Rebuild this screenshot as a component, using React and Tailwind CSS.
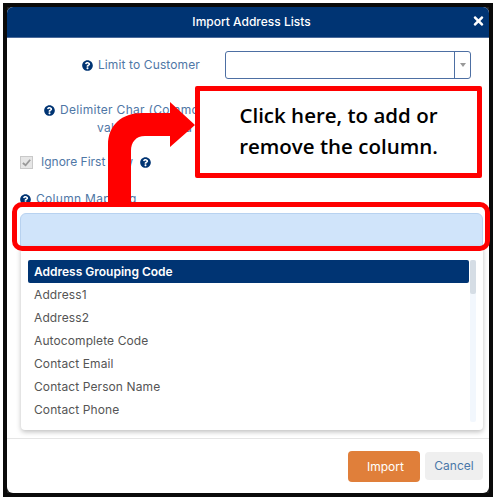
const FONT = { fontFamily: 'Inter, "Liberation Sans", sans-serif' };

function Help({ className = "" }) {
  return (
    <svg viewBox="0 0 512 512" className={`w-[11px] h-[11px] shrink-0 ${className}`} fill="#003473">
      <path d="M504 256c0 137-111 248-248 248S8 393 8 256 119 8 256 8s248 111 248 248zM262.700 90c-54.500 0-89.300 23-116.500 63.800-3.500 5.300-2.400 12.400 2.700 16.300l34.700 26.300c5.200 3.900 12.600 3 16.700-2.100 17.900-22.700 30.100-35.800 57.300-35.800 20.400 0 45.700 13.100 45.700 32.900 0 15-12.400 22.700-32.600 34-23.600 13.200-54.800 29.700-54.800 70.900V300c0 6.600 5.400 12 12 12h56c6.600 0 12-5.400 12-12v-1.300c0-28.600 83.500-29.800 83.500-107.100 0-58.200-60.400-102.600-117.700-102.600zM256 339c-25.500 0-46.200 20.700-46.200 46.200s20.700 46.200 46.200 46.200 46.200-20.700 46.200-46.200S281.500 339 256 339z" />
    </svg>
  );
}

const items = ["Address1", "Address2", "Autocomplete Code", "Contact Email", "Contact Person Name", "Contact Phone"];

export default function App() {
  return (
    <div className="relative w-[495px] h-[498px] bg-white pl-[3px] pt-[3px] overflow-hidden" style={FONT}>
      <div className="w-[490px] h-[494px] bg-[#222] border-[4px] border-[#0a0a0a]">
        <div className="flex flex-col h-full w-full bg-white rounded-[6px] overflow-hidden">
          <div className="relative flex items-center justify-center h-[31px] shrink-0 pl-[7px] bg-[#003473] border-b border-[#4a6a9a] text-white text-[12px] font-medium">
            Import Address Lists
            <span className="absolute right-[5px] top-[7px]">
              <svg viewBox="0 0 352 512" className="w-[11px] h-[14px]" fill="#ffffff">
                <path d="M242.720 256l100.070-100.070c12.280-12.280 12.280-32.190 0-44.480l-22.240-22.240c-12.280-12.280-32.190-12.280-44.480 0L176 189.280 75.930 89.210c-12.280-12.280-32.190-12.280-44.480 0L9.210 111.450c-12.280 12.280-12.280 32.190 0 44.480L109.280 256 9.210 356.070c-12.280 12.280-12.280 32.190 0 44.480l22.240 22.240c12.280 12.280 32.200 12.280 44.480 0L176 322.720l100.070 100.070c12.280 12.280 32.200 12.280 44.480 0l22.240-22.240c12.280-12.280 12.280-32.190 0-44.480L242.720 256z" />
              </svg>
            </span>
          </div>

          <div className="flex-1 px-[13px] text-[12px] text-[#4f77a6]">
            <div className="flex items-center mt-[13px] h-[28px]">
              <div className="w-[205px] flex items-center justify-end pr-[25px] gap-[5px] tracking-[0.12px]">
                <Help />
                <span>Limit to Customer</span>
              </div>
              <div className="w-[246px] h-[28px] flex justify-end border border-[#4d6fa3] rounded-[3px] bg-white">
                <div className="w-[16px] border-l border-[#4d6fa3] flex items-center justify-center">
                  <div className="w-0 h-0 border-l-[3px] border-r-[3px] border-t-[4px] border-l-transparent border-r-transparent border-t-[#999]" />
                </div>
              </div>
            </div>

            <div className="mt-[22px] leading-[18px] whitespace-nowrap tracking-[0.3px]">
              <div className="flex items-center gap-[5px] pl-[24px]">
                <Help />
                <span>Delimiter Char (Common</span>
              </div>
              <div className="pl-[77px]">value separated</div>
            </div>

            <div className="flex items-center mt-[16px] h-[18px]">
              <div className="w-[13px] h-[13px] border border-[#c9c9c9] bg-[#e6e6e6] flex items-center justify-center">
                <svg viewBox="0 0 12 12" className="w-[11px] h-[11px]" fill="none" stroke="#999" strokeWidth="2">
                  <path d="M2 6.500 L5 9 L10 3" />
                </svg>
              </div>
              <span className="ml-[8px]">Ignore First Row</span>
              <Help className="ml-[7px]" />
            </div>

            <div className="flex items-center gap-[5px] mt-[19px] h-[18px] tracking-[0.3px]">
              <Help />
              <span>Column Mapping</span>
            </div>

            <div className="w-[463px] h-[34px] mt-[5px] rounded-t-[6px] bg-[#d0e4fa] border border-[#b8d2f0]" />

            <div className="w-[462px] h-[183px] ml-[1px] flex pt-[13px] pl-[7px] rounded-b-[4px] bg-white shadow-[0_2px_5px_rgba(0,0,0,0.25)]">
              <div className="w-[441px]">
                <div className="h-[23px] flex items-center pl-[6px] rounded-[2px] bg-[#003473] text-white font-semibold">
                  Address Grouping Code
                </div>
                {items.map((t) => (
                  <div key={t} className="h-[23.100px] flex items-center pl-[6px] text-[#555] tracking-[0.1px]">
                    {t}
                  </div>
                ))}
              </div>
              <div className="w-[6px] h-[162px] ml-[1px] rounded-[2px] bg-[#f2f7fd]">
                <div className="h-[34px] rounded-[2px] bg-[#d5dde5]" />
              </div>
            </div>
          </div>

          <div className="shrink-0 h-[55px] flex items-start justify-end gap-[5px] pt-[12px] pr-[6px] border-t border-[#e5e5e5] text-[12px]">
            <div className="w-[72px] h-[31px] pl-[3px] flex items-center justify-center rounded-[4px] bg-[#e07f3a] text-white">
              Import
            </div>
            <div className="w-[58px] h-[28px] mt-[1px] flex items-center justify-center rounded-[4px] bg-[#efefef] text-[#4a78a8]">
              Cancel
            </div>
          </div>
        </div>
      </div>

      <div className="absolute left-[12px] top-[202px] w-[478px] h-[49px] rounded-[10px] border-[5px] border-[#ff0000]" />

      <svg className="absolute left-[100px] top-[95px]" width="100" height="108" viewBox="0 0 100 108">
        <path d="M8 107 V50 C8 30 22 18 42 18 H70 V7 L95 30 L70 52 V41 H45 C36 41 31 47 31 56 V107 Z" fill="#ff0000" />
      </svg>

      <div
        className="absolute left-[195px] top-[86px] w-[287px] h-[92px] flex items-center justify-center text-center pb-[2px] rounded-[2px] border-[5px] border-[#ff0000] bg-white text-black text-[20.500px] leading-[31px] font-semibold"
        style={{ fontFamily: '"Open Sans", sans-serif' }}
      >
        <div>Click here, to add or<br />remove the column.</div>
      </div>
    </div>
  );
}
